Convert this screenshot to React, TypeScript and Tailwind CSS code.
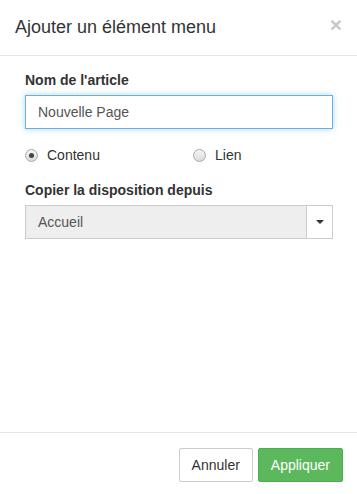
const Radio = ({ checked, label }: { checked?: boolean; label: string }) => (
  <label className="flex items-center gap-[9px] text-[14px] text-[#333]">
    <span className="flex h-[13px] w-[13px] items-center justify-center rounded-full border border-[#a9a9a9] bg-gradient-to-b from-[#f4f4f4] to-[#dcdcdc]">
      {checked && <span className="h-[5px] w-[5px] rounded-full bg-[#444]" />}
    </span>
    {label}
  </label>
);

const App = () => {
  return (
    <div
      className="flex h-[494px] w-[357px] flex-col overflow-hidden bg-white text-[#333]"
      style={{ fontFamily: '"Liberation Sans", Arial, sans-serif' }}
    >
      <div className="flex items-center justify-between border-b border-[#e5e5e5] px-[15px] pt-[14px] pb-[15px]">
        <h4 className="text-[18px] leading-[26px] text-[#333]">Ajouter un élément menu</h4>
        <button className="-mt-[6px] text-[21px] font-bold leading-none text-[#c8c8c8]">×</button>
      </div>

      <div className="flex-1 pl-[25px] pr-[24px] pt-[14px]">
        <label className="mb-[5px] block text-[14px] font-bold leading-[20px]">Nom de l'article</label>
        <input
          className="h-[34px] w-full border border-[#66afe9] px-[12px] text-[14px] text-[#555] shadow-[0_0_6px_rgba(102,175,233,0.5)] outline-none"
          defaultValue="Nouvelle Page"
        />

        <div className="mt-[17px] flex h-[18px] items-center">
          <div className="w-[168px]">
            <Radio checked label="Contenu" />
          </div>
          <Radio label="Lien" />
        </div>

        <label className="mt-[16px] mb-[5px] block text-[14px] font-bold leading-[20px]">
          Copier la disposition depuis
        </label>
        <div className="flex h-[34px] w-full border border-[#ccc]">
          <div className="flex flex-1 items-center bg-[#eee] px-[12px] text-[14px] text-[#555]">Accueil</div>
          <div className="flex w-[26px] items-center justify-center border-l border-[#ccc] bg-white">
            <span className="h-0 w-0 border-x-[4px] border-t-[4px] border-x-transparent border-t-[#333]" />
          </div>
        </div>
      </div>

      <div className="flex justify-end gap-[5px] border-t border-[#e5e5e5] px-[14px] pt-[15px] pb-[12px]">
        <button className="h-[34px] rounded-[2px] border border-[#ccc] bg-white px-[12px] text-[14px] text-[#333]">
          Annuler
        </button>
        <button className="h-[34px] rounded-[2px] border border-[#4cae4c] bg-[#5cb85c] px-[12px] text-[14px] text-white">
          Appliquer
        </button>
      </div>
    </div>
  );
};

export default App;
